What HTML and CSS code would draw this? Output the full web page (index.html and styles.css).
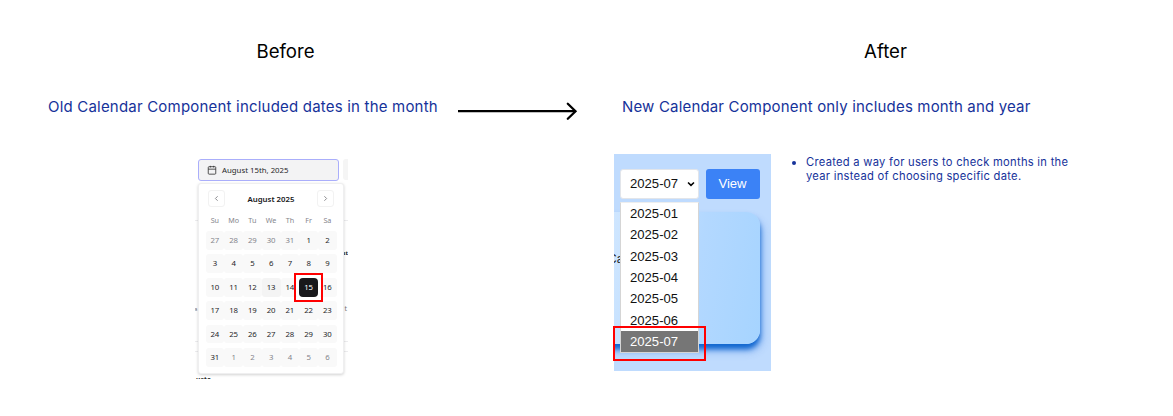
FILE: index.html
```html
<!DOCTYPE html>
<html lang="en">
<head>
<meta charset="utf-8">
<title>Calendar component: before and after</title>
<link rel="stylesheet" href="styles.css">
</head>
<body>
<main class="board">
  <section class="before">
    <h2 class="heading">Before</h2>
    <p class="caption">Old Calendar Component included dates in the month</p>
    <div class="old-shot">
      <span class="scrap scrap-button"></span>
      <span class="scrap scrap-line line-one"></span>
      <span class="scrap scrap-line line-two"></span>
      <span class="scrap scrap-line line-three"></span>
      <span class="scrap scrap-name">st</span>
      <span class="scrap scrap-left">a</span>
      <span class="scrap scrap-right">t</span>
      <span class="scrap scrap-foot">ueto</span>
      <div class="date-field">
        <svg class="field-icon" viewBox="0 0 24 24"><rect x="3" y="4" width="18" height="18" rx="2"/><path d="M8 2v4M16 2v4M3 10h18"/></svg>
        <span>August 15th, 2025</span>
      </div>
      <div class="calendar">
        <div class="month-bar">
          <span class="nav"><svg viewBox="0 0 24 24"><path d="m15 18-6-6 6-6"/></svg></span>
          <strong>August 2025</strong>
          <span class="nav"><svg viewBox="0 0 24 24"><path d="m9 18 6-6-6-6"/></svg></span>
        </div>
        <div class="weekdays"><span>Su</span><span>Mo</span><span>Tu</span><span>We</span><span>Th</span><span>Fr</span><span>Sa</span></div>
        <div class="days">
          <span class="out">27</span><span class="out">28</span><span class="out">29</span><span class="out">30</span><span class="out">31</span><span>1</span><span>2</span>
          <span>3</span><span>4</span><span>5</span><span>6</span><span>7</span><span>8</span><span>9</span>
          <span>10</span><span>11</span><span>12</span><span class="today">13</span><span>14</span><span class="chosen">15</span><span>16</span>
          <span>17</span><span>18</span><span>19</span><span>20</span><span>21</span><span>22</span><span>23</span>
          <span>24</span><span>25</span><span>26</span><span>27</span><span>28</span><span>29</span><span>30</span>
          <span>31</span><span class="out">1</span><span class="out">2</span><span class="out">3</span><span class="out">4</span><span class="out">5</span><span class="out">6</span>
        </div>
      </div>
    </div>
  </section>

  <svg class="arrow" viewBox="0 0 120 20"><path d="M0 10.2H117.5"/><path class="tip" d="M109.8 2.7L117.5 10.2L109.8 17.7"/></svg>

  <section class="after">
    <h2 class="heading">After</h2>
    <p class="caption">New Calendar Component only includes month and year</p>
    <div class="after-body">
      <div class="new-shot">
        <div class="backdrop"><div class="blue-card"></div><span class="card-text">Ca</span></div>
        <div class="controls">
          <div class="select"><span>2025-07</span><svg viewBox="0 0 10 6"><path d="M1.3 1.1L5 4.6L8.7 1.1"/></svg></div>
          <div class="view">View</div>
        </div>
        <div class="options">
          <span>2025-01</span><span>2025-02</span><span>2025-03</span><span>2025-04</span><span>2025-05</span><span>2025-06</span><span class="picked">2025-07</span>
        </div>
        <div class="marker"></div>
      </div>
      <ul class="notes"><li>Created a way for users to check months in the<br>year instead of choosing specific date.</li></ul>
    </div>
  </section>
</main>
</body>
</html>
```
FILE: styles.css
```css
* { box-sizing: border-box; }
body { margin: 0; background: #fff; font-family: Inter, sans-serif; }
.board { display: grid; grid-template-columns: 410px 119px 1fr; height: 416px; padding: 39px 40px 0 48px; overflow: hidden; }
.heading { margin: 0; font-size: 18.6px; line-height: 24px; font-weight: 400; color: #000; text-align: center; }
.before .heading { width: 475px; }
.after .heading { width: 534px; padding-left: 9px; }
.caption { margin: 34px 0 0; font-size: 15px; line-height: 20px; letter-spacing: .2px; color: #16329a; white-space: nowrap; }
.after { padding-left: 37px; }
.after .caption { padding-left: 8px; letter-spacing: .17px; }
.arrow { width: 120px; height: 20px; margin-top: 62.3px; overflow: visible; fill: none; stroke: #000; stroke-width: 2.3; }
.tip { stroke-linecap: round; }

.old-shot { position: relative; width: 153px; height: 222px; margin: 40px 0 0 147px; padding: 2px 0 0 2.5px; overflow: hidden; font-family: "Noto Sans", sans-serif; font-size: 7.8px; color: #27272a; }
.date-field { display: flex; align-items: center; gap: 5px; width: 141px; height: 22px; padding-left: 8.5px; border: 1px solid #aaaefb; border-radius: 3px; background: #f3f3f4; }
.field-icon { width: 10px; height: 10px; fill: none; stroke: #333; stroke-width: 2; }
.calendar { position: relative; width: 146.5px; height: 191px; margin-top: 2px; padding: 6px 7px; border: 1px solid #efeff0; border-radius: 3px; background: #fff; box-shadow: 0 1px 3px rgba(0,0,0,.18); }
.month-bar { display: flex; justify-content: space-between; align-items: center; height: 17px; padding: 0 1.5px 0 2px; }
.month-bar strong { font-weight: 600; font-size: 7.8px; color: #18181b; }
.nav { display: flex; width: 17px; height: 17px; align-items: center; justify-content: center; border: 1px solid #f2f2f2; border-radius: 3px; }
.nav svg { width: 9px; height: 9px; fill: none; stroke: #85858a; stroke-width: 2.5; }
.weekdays, .days { display: grid; grid-template-columns: repeat(7, 18.75px); text-align: center; }
.weekdays { height: 12px; margin-top: 7px; line-height: 12px; font-size: 7.2px; color: #85858c; }
.days { grid-auto-rows: 18.7px; row-gap: 4.75px; margin-top: 5px; line-height: 18.7px; }
.days span { border-radius: 3px; background: #f9f9f9; }
.days .out { color: #85858c; }
.days .today { background: #f4f4f4; }
.days .chosen { position: relative; border-radius: 4px; background: #18181b; color: #fff; box-shadow: 0 0 0 3px #fff; }
.chosen::after { content: ""; position: absolute; inset: -5px; border: 2.5px solid #f00; }
.scrap { position: absolute; line-height: 10px; color: #777; }
.scrap-button { left: 148px; top: 2px; width: 6px; height: 21px; border-radius: 3px 0 0 3px; background: #f5f5f5; }
.scrap-line { left: 0; right: 0; height: 1px; background: #ececee; }
.line-one { top: 63px; }
.line-two { top: 184px; }
.line-three { top: 194px; }
.scrap-name { right: 0; top: 91px; font-size: 6px; font-weight: 700; color: #222; }
.scrap-left { left: -1px; top: 147px; font-size: 6px; }
.scrap-right { right: 1px; top: 147px; font-size: 7px; }
.scrap-foot { left: 1px; top: 217.5px; font-size: 6.5px; font-weight: 700; color: #222; }

.after-body { display: flex; margin-top: 37px; align-items: flex-start; }
.new-shot { position: relative; flex: none; width: 157px; height: 217px; padding: 15px 11.5px 0 5.5px; font: 13.1px "Liberation Sans", sans-serif; color: #111; }
.backdrop { position: absolute; inset: 0; overflow: hidden; background: #bfdbfe; }
.blue-card { position: absolute; left: -20px; top: 58px; width: 166px; height: 132px; border-radius: 14px; background: linear-gradient(100deg, #d5e9ff 0%, #b3d8ff 60%, #a6d4ff 100%); box-shadow: 0 5px 5px #1268d0, 2px 7px 8px rgba(50,120,220,.45); }
.card-text { position: absolute; left: -6px; top: 98px; font-size: 12px; color: #222; }
.controls { position: relative; display: flex; justify-content: space-between; }
.select { display: flex; align-items: center; justify-content: space-between; width: 79px; height: 30px; padding: 0 3px 1px 10px; border: 1px solid #e2e5ea; border-radius: 3px; background: #fff; }
.select span { margin-left: -.5px; }
.select svg { width: 8px; height: 6px; fill: none; stroke: #000; stroke-width: 2; }
.view { width: 54px; height: 30px; border-radius: 3px; background: #3b82f6; color: #fff; line-height: 29px; text-align: center; }
.options { position: relative; display: grid; grid-auto-rows: 21.35px; width: 79px; margin-top: 3px; border: 1px solid #d5d5d5; border-top-color: #eee; background: #fff; }
.options span { padding-left: 9.5px; line-height: 21.35px; }
.options .picked { background: #767676; color: #fff; }
.marker { position: absolute; left: -1px; top: 171.5px; width: 93px; height: 35.5px; border: 2.5px solid #f00; }
.notes { margin: 0 0 0 35px; padding: 1px 0 0; font-size: 11.2px; line-height: 14px; letter-spacing: .27px; color: #16329a; white-space: nowrap; }
```
